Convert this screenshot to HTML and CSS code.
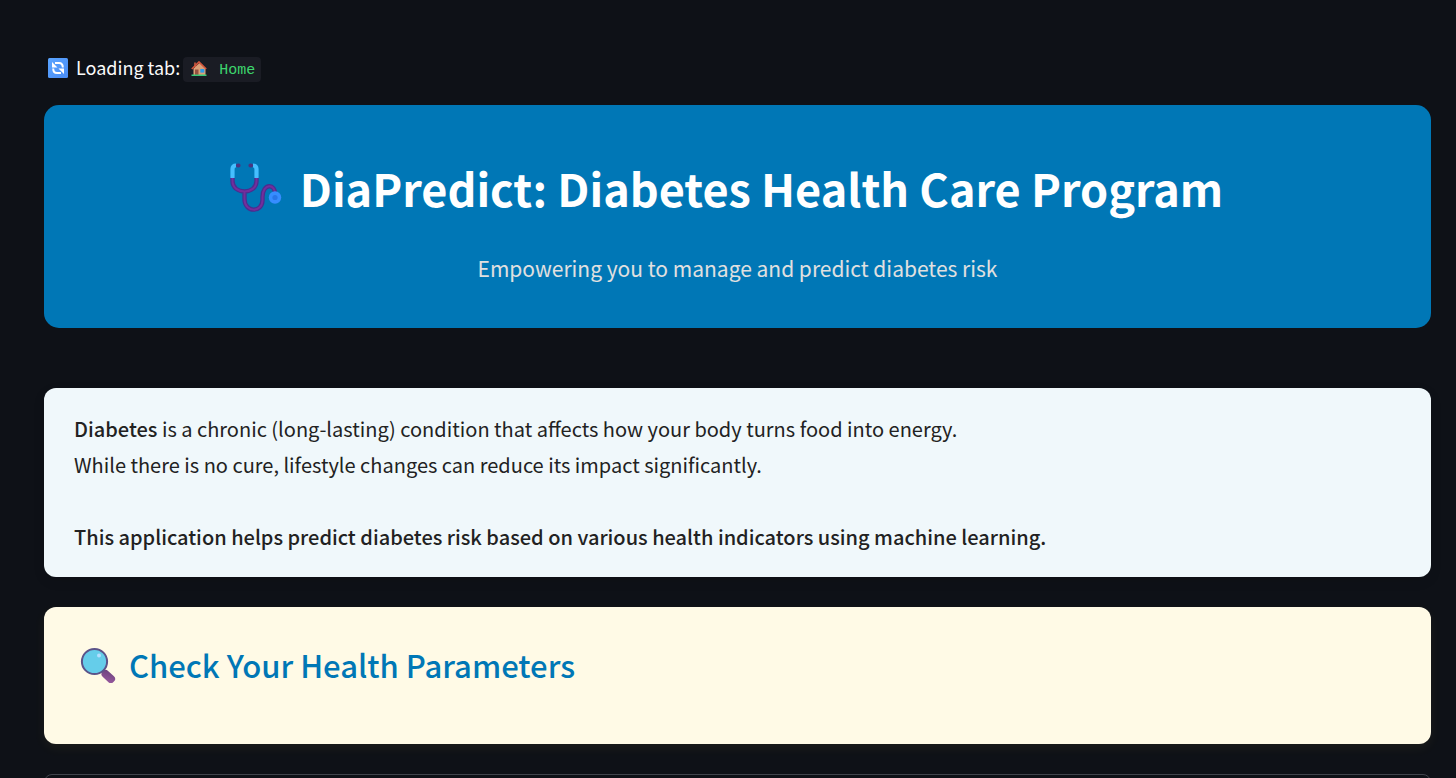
FILE: index.html
```html
<!DOCTYPE html>
<html lang="en">
<head>
<meta charset="utf-8">
<meta name="viewport" content="width=device-width, initial-scale=1">
<title>DiaPredict</title>
<link rel="stylesheet" href="styles.css">
</head>
<body>
<main class="page">
  <p class="status">
    <svg class="status-icon" viewBox="0 0 20 20" aria-hidden="true">
      <defs><linearGradient id="tile" x1="0" y1="0" x2="1" y2="1"><stop offset="0" stop-color="#5aa5ff"/><stop offset="1" stop-color="#4a8cf5"/></linearGradient></defs>
      <rect width="20" height="20" rx="1.5" fill="url(#tile)"/>
      <g fill="none" stroke="#fff" stroke-width="2">
        <path d="M7 5H11C13.500 5 14.800 6.500 14.800 9.500"/>
        <path d="M13 15H9C6.500 15 5.200 13.500 5.200 10.500"/>
      </g>
      <path d="M4 4V9.500H9.500ZM16 16V10.500H10.500Z" fill="#fff"/>
    </svg>
    <span>Loading tab:</span>
    <code class="tab-name">
      <svg class="home-icon" viewBox="0 0 16 16" aria-hidden="true">
        <path d="M3 1.500H5.200V6H3Z" fill="#a9503c"/>
        <path d="M2.500 7.500L8.500 2L14.500 7.500V14H2.500Z" fill="#dba078"/>
        <path d="M0.800 8L8 1L15.200 8" fill="none" stroke="#d3543b" stroke-width="1.700"/>
        <rect x="4" y="8.500" width="3.500" height="5.500" fill="#96503f"/>
        <rect x="9.300" y="8" width="4" height="3.600" fill="#2d9be8"/>
        <rect x="0.500" y="13.500" width="15" height="1.500" fill="#39c878"/>
      </svg>
      <span>Home</span>
    </code>
  </p>

  <header class="hero">
    <h1 class="hero-title">
      <svg class="hero-icon" viewBox="0 0 52 50" aria-hidden="true">
        <g fill="none" stroke-linecap="round">
          <path d="M2.500 15V18C2.500 32 26.500 32 26.500 18V15M14.500 29V36C14.500 50 32.500 50 32.500 37V34C32.500 20 46 20 45 32" stroke="#482f8f" stroke-width="4.400"/>
          <path d="M2.500 15V18C2.500 32 26.500 32 26.500 18V15M14.500 29V36C14.500 50 32.500 50 32.500 37V34C32.500 20 46 20 45 32" stroke="#742e9c" stroke-width="2"/>
          <path d="M2.500 15V6Q2.500 2.500 6 2.500M26.500 15V6Q26.500 2.500 23 2.500" stroke="#45bfff" stroke-width="4.200" stroke-linecap="butt"/>
          <path d="M8 2.500H8.500M20.500 2.500H21" stroke="#4b347f" stroke-width="4.200"/>
        </g>
        <circle cx="45" cy="34.500" r="6.200" fill="#368dff"/>
        <circle cx="45" cy="34.500" r="2.600" fill="#2876e8"/>
      </svg>
      <span>DiaPredict: Diabetes Health Care Program</span>
    </h1>
    <p class="hero-subtitle">Empowering you to manage and predict diabetes risk</p>
  </header>

  <section class="card card-info">
    <p><strong>Diabetes</strong> is a chronic (long-lasting) condition that affects how your body turns food into energy.<br>While there is no cure, lifestyle changes can reduce its impact significantly.</p>
    <p><strong>This application helps predict diabetes risk based on various health indicators using machine learning.</strong></p>
  </section>

  <section class="card card-check">
    <h2 class="check-title">
      <svg class="search-icon" viewBox="0 0 36 36" aria-hidden="true">
        <defs><linearGradient id="grip" x1="0" y1="0" x2="1" y2="1"><stop offset="0" stop-color="#6a427c"/><stop offset="1" stop-color="#9a5aa0"/></linearGradient></defs>
        <path d="M20 21L24 25" stroke="#62517e" stroke-width="3"/>
        <rect x="-3" y="-4" width="15" height="8" rx="3.500" fill="url(#grip)" transform="translate(25 26.500) rotate(43)"/>
        <circle cx="14.500" cy="14.500" r="12.600" fill="#65cdea" stroke="#5b5389" stroke-width="2"/>
        <circle cx="19" cy="8.500" r="2" fill="#b3dfff"/>
      </svg>
      <span>Check Your Health Parameters</span>
    </h2>
  </section>

  <section class="panel" aria-label="Health parameters"></section>
</main>
</body>
</html>
```
FILE: styles.css
```css
* {
  box-sizing: border-box;
}

body {
  margin: 0;
  background: #0e1117;
  color: #fafafa;
  font-family: "Noto Sans CJK SC", "Noto Sans", sans-serif;
}

h1,
h2,
p {
  margin: 0;
}

.page {
  display: flex;
  flex-direction: column;
  height: 100vh;
  overflow: hidden;
  padding: 54px 25px 0 44px;
}

.page > * {
  flex-shrink: 0;
}

.status {
  display: flex;
  align-items: center;
  height: 28px;
  margin-bottom: 23px;
  padding-left: 4px;
  font-size: 18px;
  line-height: 26px;
}

.status > span {
  padding-bottom: 2px;
}

.status-icon {
  width: 20px;
  height: 20px;
  margin-right: 8px;
}

.tab-name {
  display: flex;
  align-items: center;
  gap: 12px;
  height: 25px;
  margin: 2px 0 0 3px;
  padding: 0 6px 0 8px;
  border-radius: 4px;
  background: #1a1c24;
  color: #3dd56d;
  font-family: "Liberation Mono", monospace;
  font-size: 15px;
}

.tab-name span {
  padding-top: 4px;
}

.home-icon {
  width: 16px;
  height: 16px;
}

.hero {
  display: flex;
  flex-direction: column;
  align-items: center;
  gap: 28px;
  padding: 49px 30px 42px;
  border-radius: 15px;
  background: #0077b6;
}

.hero-title {
  display: flex;
  align-items: center;
  gap: 18px;
  padding-right: 22px;
  color: #fff;
  font-size: 45px;
  font-weight: 700;
  line-height: 68px;
}

.hero-icon {
  width: 52px;
  height: 50px;
}

.hero-subtitle {
  color: #e0e0e0;
  font-size: 21px;
  line-height: 36px;
}

.card {
  border-radius: 12px;
}

.card-info {
  display: flex;
  flex-direction: column;
  gap: 36px;
  margin-top: 60px;
  padding: 23px 30px 22px;
  background: #f0f8fb;
  color: #222;
  font-size: 20px;
  line-height: 36px;
  box-shadow: 0 4px 12px rgba(0, 0, 0, 0.1);
}

.card-info strong {
  font-weight: 500;
}

.card-check {
  margin-top: 30px;
  padding: 30px 30px 51px 36px;
  background: #fffae6;
  box-shadow: 0 4px 12px rgba(255, 220, 80, 0.06);
}

.check-title {
  display: flex;
  align-items: center;
  gap: 13px;
  color: #0077b6;
  font-size: 31px;
  font-weight: 500;
  line-height: 56px;
}

.search-icon {
  width: 36px;
  height: 36px;
}

.panel {
  min-height: 120px;
  margin-top: 30px;
  border: 1px solid #41444c;
  border-radius: 8px;
}
```
